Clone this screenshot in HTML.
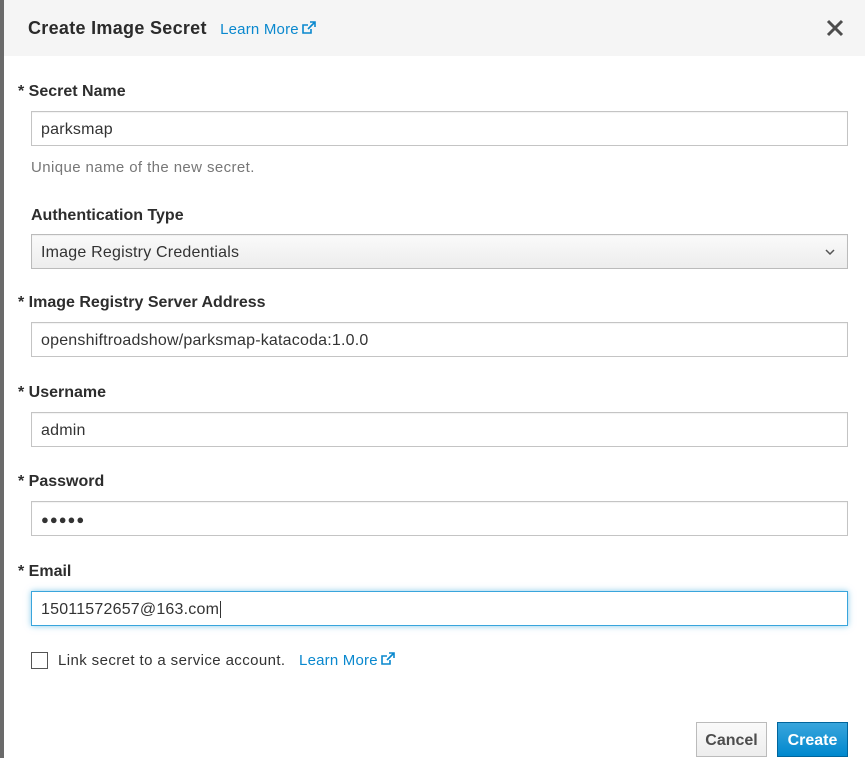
<!DOCTYPE html>
<html><head><style>
*{box-sizing:border-box;margin:0;padding:0}
body{width:865px;height:758px;background:#fff;font-family:"Liberation Sans",sans-serif;position:relative;overflow:hidden;color:#363636}
.strip{position:absolute;left:0;top:0;width:4px;height:758px;background:#6a6a6a}
.hdr{position:absolute;left:4px;top:0;width:861px;height:56px;background:#f5f5f5}
.t{position:absolute;left:28px;top:18px;font-size:18px;font-weight:bold;color:#2b2b2b;letter-spacing:0.3px}
.lm{color:#0a88ce;font-size:15px;letter-spacing:0.2px}
.abs{position:absolute}
.lbl{position:absolute;font-size:16px;font-weight:bold;color:#2d2d2d}
.inp{position:absolute;left:31px;width:817px;height:35px;border:1px solid #c4c4c4;background:#fff;font-size:16px;padding:9px 9px 7px;color:#333;box-shadow:inset 0 1px 1px rgba(0,0,0,.05);letter-spacing:0.2px}
.help{position:absolute;left:31px;top:159px;font-size:15px;color:#777;letter-spacing:0.4px}
.btn{position:absolute;top:722px;height:35px;font-size:16px;font-weight:bold;padding:9px 0;text-align:center}
</style></head><body>
<div class="strip"></div>
<div class="hdr"></div>
<div class="t">Create Image Secret <span class="lm" style="font-weight:normal;margin-left:8px">Learn More<svg width="15" height="14" viewBox="0 0 15 14" style="margin-left:2px;vertical-align:-1px"><path d="M10 8v4H2V4h5" fill="none" stroke="#0a88ce" stroke-width="1.6"/><path d="M9 1h5v5M14 1L7 8" fill="none" stroke="#0a88ce" stroke-width="1.6"/></svg></span></div>
<svg class="abs" style="left:825px;top:18px" width="20" height="20" viewBox="0 0 20 20"><path d="M3 3L17 17M17 3L3 17" stroke="#4d4d4d" stroke-width="3"/></svg>

<div class="lbl" style="left:18px;top:83px">* Secret Name</div>
<div class="inp" style="top:111px">parksmap</div>
<div class="help">Unique name of the new secret.</div>

<div class="lbl" style="left:31px;top:207px">Authentication Type</div>
<div class="inp" style="top:234px;background:linear-gradient(#fafafa,#ededed);border-color:#bbb">Image Registry Credentials
<svg class="abs" style="right:12px;top:14px" width="10" height="7" viewBox="0 0 10 7"><path d="M1 1l4 4 4-4" fill="none" stroke="#555" stroke-width="1.5"/></svg></div>

<div class="lbl" style="left:18px;top:294px">* Image Registry Server Address</div>
<div class="inp" style="top:322px">openshiftroadshow/parksmap-katacoda:1.0.0</div>

<div class="lbl" style="left:18px;top:384px">* Username</div>
<div class="inp" style="top:412px">admin</div>

<div class="lbl" style="left:18px;top:473px">* Password</div>
<div class="inp" style="top:501px;font-size:13px;padding-top:10px;letter-spacing:1px">●●●●●</div>

<div class="lbl" style="left:18px;top:563px">* Email</div>
<div class="inp" style="top:591px;border-color:#39a5dc;box-shadow:0 0 6px rgba(57,165,220,.6)">15011572657@163.com<span style="border-left:1px solid #333;margin-left:1px"></span></div>

<div class="abs" style="left:31px;top:652px;width:17px;height:17px;border:1px solid #555;background:#fff"></div>
<div class="abs" style="left:58px;top:652px;font-size:15px;color:#333;letter-spacing:0.4px">Link secret to a service account. <span class="lm" style="margin-left:9px">Learn More<svg width="15" height="14" viewBox="0 0 15 14" style="margin-left:2px;vertical-align:-1px"><path d="M10 8v4H2V4h5" fill="none" stroke="#0a88ce" stroke-width="1.6"/><path d="M9 1h5v5M14 1L7 8" fill="none" stroke="#0a88ce" stroke-width="1.6"/></svg></span></div>

<div class="btn" style="left:696px;width:71px;border:1px solid #bbb;background:linear-gradient(#fafafa,#ededed);color:#4d4d4d">Cancel</div>
<div class="btn" style="left:777px;width:71px;border:1px solid #00659c;background:linear-gradient(#39a5dc,#0088ce);color:#fff">Create</div>
</body></html>
